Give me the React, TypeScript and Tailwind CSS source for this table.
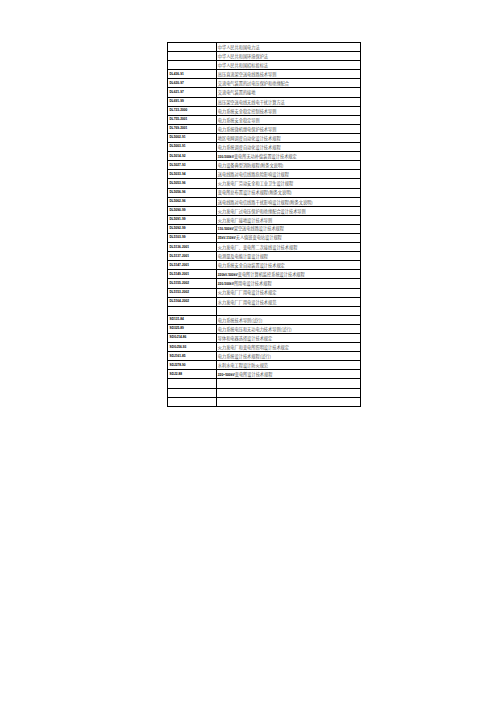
const rows: [string, string][] = [
  ["", "中华人民共和国电力法"],
  ["", "中华人民共和国环境保护法"],
  ["", "中华人民共和国招标投标法"],
  ["DL436-91", "高压直流架空送电线路技术导则"],
  ["DL620-97", "交流电气装置的过电压保护和绝缘配合"],
  ["DL621-97", "交流电气装置的接地"],
  ["DL691-99", "高压架空送电线无线电干扰计算方法"],
  ["DL723-2000", "电力系统安全稳定控制技术导则"],
  ["DL755-2001", "电力系统安全稳定导则"],
  ["DL769-2001", "电力系统微机继电保护技术导则"],
  ["DL5002-91", "地区电网调度自动化设计技术规程"],
  ["DL5003-91", "电力系统调度自动化设计技术规程"],
  ["DL5014-92", "330-500kV变电所无功补偿装置设计技术规定"],
  ["DL5027-93", "电力设备典型消防规程(附条文说明)"],
  ["DL5033-94", "送电线路对电信线路危险影响设计规程"],
  ["DL5053-96", "火力发电厂劳动安全和工业卫生设计规程"],
  ["DL5056-96", "变电所总布置设计技术规程(附条文说明)"],
  ["DL5062-96", "送电线路对电信线路干扰影响设计规程(附条文说明)"],
  ["DL5090-99", "火力发电厂过电压保护和绝缘配合设计技术导则"],
  ["DL5091-99", "火力发电厂接地设计技术导则"],
  ["DL5092-99", "110-500kV架空送电线路设计技术规程"],
  ["DL5103-99", "35kV-110kV无人值班变电站设计规程"],
  ["DL5136-2001", "火力发电厂、变电所二次接线设计技术规程"],
  ["DL5137-2001", "电测量及电能计量设计规程"],
  ["DL5147-2001", "电力系统安全自动装置设计技术规定"],
  ["DL5149-2001", "220kV-500kV变电所计算机监控系统设计技术规程"],
  ["DL5155-2002", "220-500kV所用电设计技术规程"],
  ["DL5153-2002", "火力发电厂厂用电设计技术规定"],
  ["DL5164-2002", "水力发电厂厂用电设计技术规范"],
  ["", ""],
  ["SD131-84", "电力系统技术导则(试行)"],
  ["SD325-89", "电力系统电压和无功电力技术导则(试行)"],
  ["SDGJ14-86", "导体和电器选择设计技术规定"],
  ["SDGJ56-93", "火力发电厂和变电所照明设计技术规定"],
  ["SDJ161-85", "电力系统设计技术规程(试行)"],
  ["SDJ278-90", "水利水电工程设计防火规范"],
  ["SDJ2-88", "220~500kV变电所设计技术规程"],
  ["", ""],
  ["", ""],
  ["", ""],
];

// numbers and kV in the title column show in the same bold face as the codes
function Title({ text }: { text: string }) {
  const parts = text.split(/([0-9A-Za-z~\-]+)/).filter(Boolean);
  return (
    <span>
      {parts.map((p, i) =>
        /^[0-9A-Za-z~\-]+$/.test(p) ? (
          <span key={i} className="font-['Liberation_Sans',sans-serif] text-[3.3px] font-bold text-black">
            {p}
          </span>
        ) : (
          <span key={i}>{p}</span>
        )
      )}
    </span>
  );
}

export default function App() {
  return (
    <div className="min-h-screen w-full bg-white pt-[42px] pl-[167px]">
      <div className="w-[194px] border-l border-t border-black">
        {rows.map(([code, title], i) => (
          <div key={i} className="flex h-[9.1px]">
            <div className="flex w-[49px] items-center overflow-hidden whitespace-nowrap border-b border-r border-black pl-[1.5px] font-['Liberation_Sans',sans-serif] text-[3.2px] font-bold leading-none text-black">
              {code}
            </div>
            <div className="flex w-[145px] items-center overflow-hidden whitespace-nowrap border-b border-r border-black pl-[1px] font-['Noto_Sans_CJK_SC',sans-serif] text-[4.2px] leading-none text-[#555]">
              <Title text={title} />
            </div>
          </div>
        ))}
      </div>
    </div>
  );
}
